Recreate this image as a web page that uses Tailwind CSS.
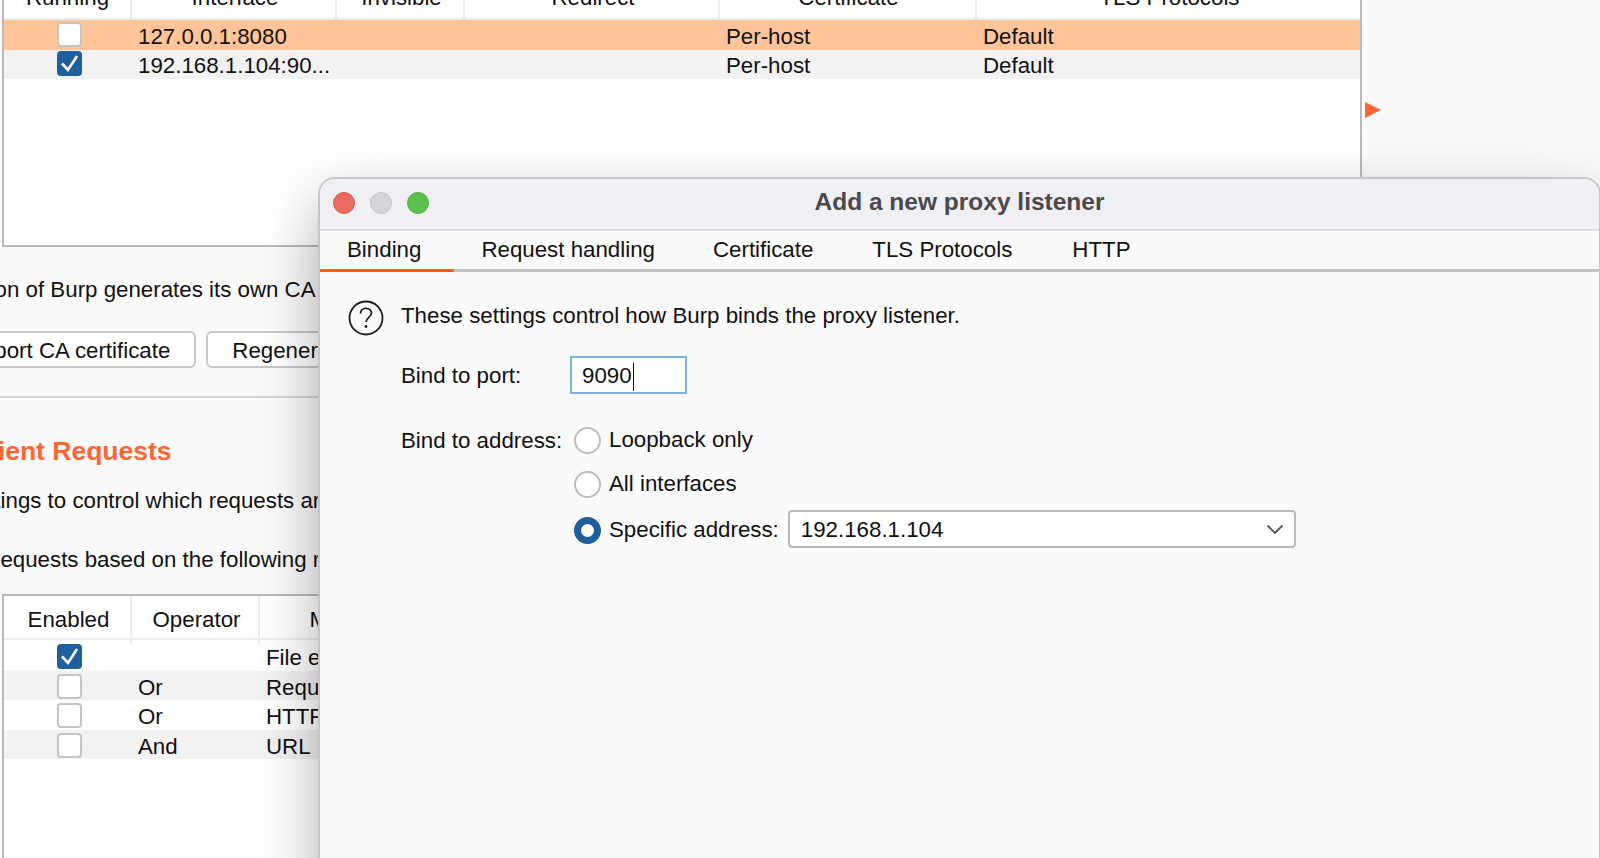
<!DOCTYPE html>
<html lang="en">
<head>
    <meta charset="UTF-8">
    <title>Add a new proxy listener</title>
    <script src="https://cdn.jsdelivr.net/npm/@tailwindcss/browser@4"></script>
</head>
<body class="m-0 overflow-hidden">
<div class="relative w-[1600px] h-[858px] overflow-hidden bg-[#fafafa] font-['Liberation_Sans',Arial,sans-serif] text-[22.3px] text-[#111]">

    <!-- proxy listeners table, cut off by the top edge -->
    <div class="ml-[2px] -mt-[21px] w-[1360px] h-[268px] bg-white border-2 border-t-0 border-[#b9b9b9]">
        <div class="grid grid-cols-[128px_205px_128px_255px_257px_383px] h-[41px] border-b-2 border-[#ececec] text-center leading-[38px]">
            <div class="border-r-2 border-[#ececec] pl-[1px]">Running</div>
            <div class="border-r-2 border-[#ececec] pl-[3px]">Interface</div>
            <div class="border-r-2 border-[#ececec] pl-[3px]">Invisible</div>
            <div class="border-r-2 border-[#ececec] pl-[3px]">Redirect</div>
            <div class="border-r-2 border-[#ececec] pl-[2px]">Certificate</div>
            <div class="pl-[2px]">TLS Protocols</div>
        </div>
        <div class="grid grid-cols-[128px_205px_128px_255px_257px_383px] h-[30px] bg-[#ffc599] leading-[33px]">
            <div class="flex justify-center items-center"><span class="block ml-[3px] -mt-[5px] w-[25px] h-[25px] rounded-[4px] bg-white border-2 border-[#c4c4c4]"></span></div>
            <div class="pl-[6px]">127.0.0.1:8080</div>
            <div></div>
            <div></div>
            <div class="pl-[6px]">Per-host</div>
            <div class="pl-[6px]">Default</div>
        </div>
        <div class="grid grid-cols-[128px_205px_128px_255px_257px_383px] h-[29px] bg-[#f2f2f2] leading-[32px]">
            <div class="flex justify-center items-center">
                <span class="block ml-[3px] -mt-[5px] w-[25px] h-[25px] rounded-[4px] bg-[#1f5f9e]">
                    <svg width="25" height="25" viewBox="0 0 25 25" fill="none" stroke="white" stroke-width="2.6"><path d="M5 12.5l6 6.5L20 5"/></svg>
                </span>
            </div>
            <div class="pl-[6px]">192.168.1.104:90...</div>
            <div></div>
            <div></div>
            <div class="pl-[6px]">Per-host</div>
            <div class="pl-[6px]">Default</div>
        </div>
    </div>

    <!-- CA certificate section -->
    <div class="mt-[28px] h-[30px] leading-[30px] whitespace-nowrap -ml-[143px]">Each installation of Burp generates its own CA certificate</div>
    <div class="flex gap-[10px] mt-[26px] -ml-[139px]">
        <div class="h-[37px] pl-[26px] pr-[24px] leading-[35px] bg-white border-2 border-[#c9c6c6] rounded-[6px] whitespace-nowrap">Import / export CA certificate</div>
        <div class="h-[37px] pl-[24px] pr-[26px] leading-[35px] bg-white border-2 border-[#c9c6c6] rounded-[6px] whitespace-nowrap">Regenerate CA certificate</div>
    </div>
    <div class="mt-[28px] h-[2px] bg-[#d4d4d4]"></div>

    <!-- intercept client requests -->
    <div class="mt-[37px] h-[32px] leading-[32px] text-[26.5px] font-bold text-[#ff6633] whitespace-nowrap -ml-[148px]">Intercept Client Requests</div>
    <div class="mt-[19px] h-[30px] leading-[30px] whitespace-nowrap -ml-[142px]">Use these settings to control which requests are stalled</div>
    <div class="mt-[29px] h-[30px] leading-[30px] whitespace-nowrap -ml-[100px]">Intercept requests based on the following rules:</div>

    <!-- rules table -->
    <div class="ml-[2px] mt-[19px] w-[1360px] h-[300px] bg-white border-2 border-b-0 border-[#b9b9b9]">
        <div class="grid grid-cols-[128px_128px_208px_1fr] h-[44px] border-b-2 border-[#ececec] text-center leading-[48px]">
            <div class="border-r-2 border-[#ececec] pl-[3px]">Enabled</div>
            <div class="border-r-2 border-[#ececec] pl-[3px]">Operator</div>
            <div class="border-r-2 border-[#ececec] pl-[2px]">Match type</div>
            <div></div>
        </div>
        <div class="grid grid-cols-[128px_128px_208px_1fr] h-[31px] leading-[35px]">
            <div class="flex justify-center items-center">
                <span class="block ml-[3px] -mt-[3px] w-[25px] h-[25px] rounded-[4px] bg-[#1f5f9e]">
                    <svg width="25" height="25" viewBox="0 0 25 25" fill="none" stroke="white" stroke-width="2.6"><path d="M5 12.5l6 6.5L20 5"/></svg>
                </span>
            </div>
            <div></div>
            <div class="pl-[6px]">File extension</div>
            <div></div>
        </div>
        <div class="grid grid-cols-[128px_128px_208px_1fr] h-[29px] bg-[#f2f2f2] leading-[33px]">
            <div class="flex justify-center items-center"><span class="block ml-[3px] -mt-[3px] w-[25px] h-[25px] rounded-[4px] bg-white border-2 border-[#c4c4c4]"></span></div>
            <div class="pl-[6px]">Or</div>
            <div class="pl-[6px]">Request</div>
            <div></div>
        </div>
        <div class="grid grid-cols-[128px_128px_208px_1fr] h-[30px] leading-[34px]">
            <div class="flex justify-center items-center"><span class="block ml-[3px] -mt-[3px] w-[25px] h-[25px] rounded-[4px] bg-white border-2 border-[#c4c4c4]"></span></div>
            <div class="pl-[6px]">Or</div>
            <div class="pl-[6px]">HTTP method</div>
            <div></div>
        </div>
        <div class="grid grid-cols-[128px_128px_208px_1fr] h-[29px] bg-[#f2f2f2] leading-[33px]">
            <div class="flex justify-center items-center"><span class="block ml-[3px] -mt-[3px] w-[25px] h-[25px] rounded-[4px] bg-white border-2 border-[#c4c4c4]"></span></div>
            <div class="pl-[6px]">And</div>
            <div class="pl-[6px]">URL</div>
            <div></div>
        </div>
    </div>

    <!-- collapse arrow -->
    <svg class="absolute left-[1365px] top-[102px]" width="16" height="16" viewBox="0 0 16 16"><path d="M0 0L16 8L0 16Z" fill="#ff6633"/></svg>

    <!-- dialog window -->
    <div class="absolute left-[318px] top-[177px] w-[1283px] h-[720px] bg-[#fafafa] border-2 border-[#c6c6c8] rounded-t-[17px] shadow-[0_25px_60px_rgba(0,0,0,0.32)]">
        <div class="relative flex justify-center items-center h-[52px] pb-[3px] bg-[#f0eff4] rounded-t-[15px] border-b-2 border-[#dcdcde]">
            <div class="absolute left-[13px] top-[13px] flex gap-[15px]">
                <span class="block w-[22px] h-[22px] rounded-full bg-[#ec6a5e] border border-[#d9584f]"></span>
                <span class="block w-[22px] h-[22px] rounded-full bg-[#d5d4d9] border border-[#c6c5ca]"></span>
                <span class="block w-[22px] h-[22px] rounded-full bg-[#5ec04f] border border-[#52ae45]"></span>
            </div>
            <h1 class="text-[24.5px] font-bold text-[#4a4a4c]">Add a new proxy listener</h1>
        </div>

        <div class="flex h-[41px] border-b-[3px] border-[#c3c3c3] leading-[38px]">
            <div class="h-[41px] pl-[27px] pr-[33px] border-b-[3px] border-[#ff5a1f]">Binding</div>
            <div class="pl-[27px] pr-[29px]">Request handling</div>
            <div class="pl-[29px] pr-[30px]">Certificate</div>
            <div class="pl-[29px] pr-[31px]">TLS Protocols</div>
            <div class="pl-[29px] pr-[29px]">HTTP</div>
        </div>

        <div class="pl-[28px] pt-[25px]">
            <div class="flex items-center gap-[17px] h-[36px]">
                <svg width="36" height="36" viewBox="0 0 36 36" fill="none" class="mt-[5px]">
                    <circle cx="18" cy="18" r="16.5" stroke="#1c1c1c" stroke-width="1.8"/>
                    <path d="M12.5 13.5c0-3.4 2.5-5.2 5.5-5.2s5.5 1.9 5.5 4.8c0 4.2-5.5 4.4-5.5 9" stroke="#1c1c1c" stroke-width="1.8"/>
                    <circle cx="18" cy="26.5" r="1.4" fill="#1c1c1c"/>
                </svg>
                <p class="mt-[2px]">These settings control how Burp binds the proxy listener.</p>
            </div>

            <div class="flex items-center h-[38px] mt-[23px] pl-[53px]">
                <span class="w-[169px] mt-[2px]">Bind to port:</span>
                <div class="w-[117px] h-[38px] pl-[10px] leading-[36px] bg-white border-2 border-[#7fb0e6]">9090<span class="inline-block align-middle w-[1.5px] h-[28px] ml-[1px] bg-[#111]"></span></div>
            </div>

            <div class="flex pl-[53px] mt-[30px]">
                <span class="w-[173px] leading-[34px]">Bind to address:</span>
                <div class="flex flex-col">
                    <label class="flex items-center h-[32px] gap-[8px]"><span class="block w-[27px] h-[27px] rounded-full bg-white border-2 border-[#bcbcbc]"></span>Loopback only</label>
                    <label class="flex items-center h-[32px] mt-[12px] gap-[8px]"><span class="block w-[27px] h-[27px] rounded-full bg-white border-2 border-[#bcbcbc]"></span>All interfaces</label>
                    <div class="flex items-center h-[38px] mt-[10px]">
                        <label class="flex items-center gap-[8px] mt-[2px]"><span class="block w-[27px] h-[27px] rounded-full bg-white border-[7px] border-[#1f5f9e]"></span>Specific address:</label>
                        <div class="flex justify-between items-center w-[508px] h-[38px] ml-[9px] pl-[11px] pr-[10px] bg-white border-2 border-[#bdb8b8] rounded-[4px]">
                            <span class="mt-[1px]">192.168.1.104</span>
                            <svg width="18" height="11" viewBox="0 0 18 11" fill="none" stroke="#555" stroke-width="1.8"><path d="M1.5 1.5L9 9l7.5-7.5"/></svg>
                        </div>
                    </div>
                </div>
            </div>
        </div>
    </div>
</div>
</body>
</html>
